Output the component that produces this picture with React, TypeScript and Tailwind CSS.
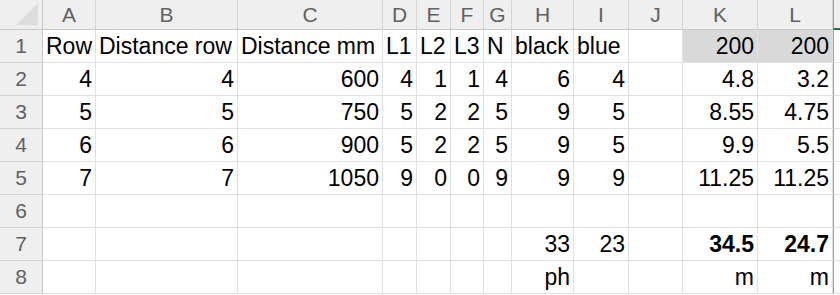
import { Fragment } from "react";

const columns = ["A", "B", "C", "D", "E", "F", "G", "H", "I", "J", "K", "L"];

type Cell = { v?: string; left?: boolean; bold?: boolean; fill?: boolean };

const n = (v: string): Cell => ({ v });
const t = (v: string): Cell => ({ v, left: true });
const e: Cell = {};

const rows: Cell[][] = [
  [t("Row"), t("Distance row"), t("Distance mm"), t("L1"), t("L2"), t("L3"), t("N"), t("black"), t("blue"), e, { v: "200", fill: true }, { v: "200", fill: true }],
  [n("4"), n("4"), n("600"), n("4"), n("1"), n("1"), n("4"), n("6"), n("4"), e, n("4.8"), n("3.2")],
  [n("5"), n("5"), n("750"), n("5"), n("2"), n("2"), n("5"), n("9"), n("5"), e, n("8.55"), n("4.75")],
  [n("6"), n("6"), n("900"), n("5"), n("2"), n("2"), n("5"), n("9"), n("5"), e, n("9.9"), n("5.5")],
  [n("7"), n("7"), n("1050"), n("9"), n("0"), n("0"), n("9"), n("9"), n("9"), e, n("11.25"), n("11.25")],
  [e, e, e, e, e, e, e, e, e, e, e, e],
  [e, e, e, e, e, e, e, n("33"), n("23"), e, { v: "34.5", bold: true }, { v: "24.7", bold: true }],
  [e, e, e, e, e, e, e, n("ph"), e, e, n("m"), n("m")],
];

export default function App() {
  return (
    <div
      className="grid h-[295px] w-[840px] overflow-hidden bg-white grid-cols-[43px_53px_142px_145px_34px_34px_33px_28px_62px_55px_54px_75px_75px_1fr] grid-rows-[30px_repeat(8,33px)_1fr]"
      style={{ fontFamily: '"Liberation Sans", Arial, sans-serif' }}
    >
      {/* corner */}
      <div className="relative border-r border-b border-[#c9c9c9] bg-[#efefef]">
        <div className="absolute right-[4px] bottom-[4px] h-0 w-0 [border-bottom:22px_solid_#dcdcdc] [border-left:22px_solid_transparent]" />
      </div>
      {columns.map((c) => (
        <div
          key={c}
          className="flex items-center justify-center border-r border-b border-[#d4d4d4] border-b-[#c9c9c9] bg-[#efefef] text-[21px] text-[#616161]"
        >
          {c}
        </div>
      ))}
      <div className="border-l border-[#9e9e9e] border-b-2 border-b-[#217346] bg-[#efefef]" />

      {rows.map((row, ri) => (
        <Fragment key={ri}>
          <div className="flex items-center justify-center border-r border-b border-[#c9c9c9] border-b-[#d4d4d4] bg-[#efefef] text-[21px] text-[#616161]">
            {ri + 1}
          </div>
          {row.map((cell, ci) => (
            <div
              key={ci}
              className={`flex items-end overflow-visible whitespace-nowrap border-r border-b border-[#e1e1e1] px-[3px] pb-[3px] text-[23px] leading-[26px] text-black ${
                cell.left ? "justify-start" : "justify-end"
              } ${cell.bold ? "font-bold" : ""} ${cell.fill ? "bg-[#d9d9d9]" : ""}`}
            >
              {cell.v}
            </div>
          ))}
          <div className="border-l border-[#9e9e9e] border-b border-b-[#e1e1e1]" />
        </Fragment>
      ))}
    </div>
  );
}
